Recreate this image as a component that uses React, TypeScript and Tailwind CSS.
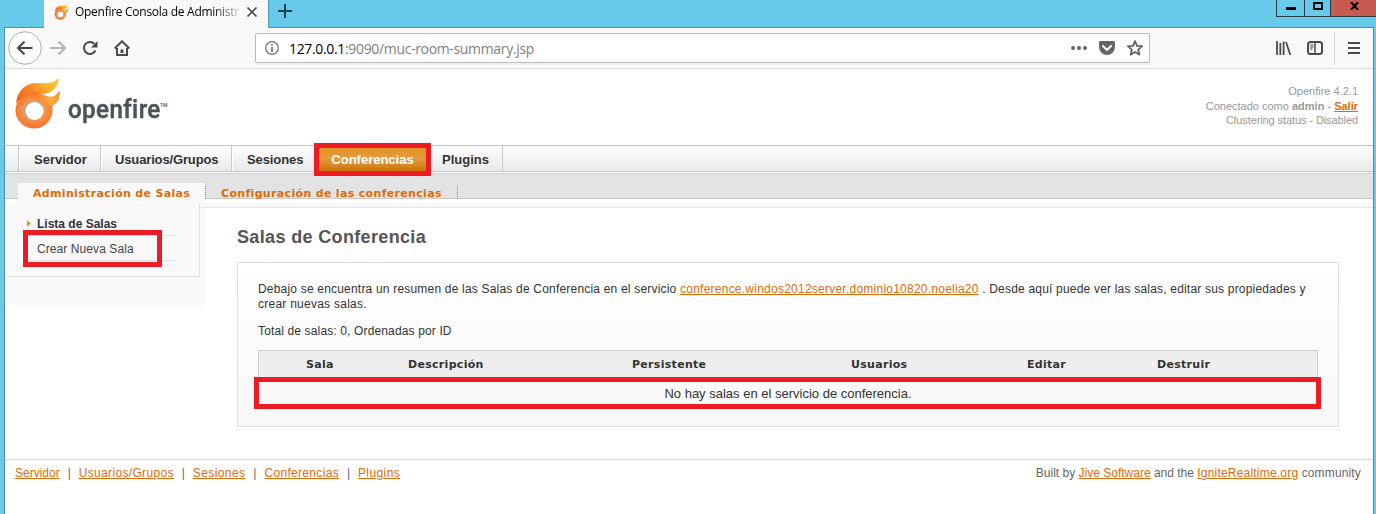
import React from "react";

const arial = "font-['Liberation_Sans',Arial,sans-serif]";
const link = "text-[#dc6c0a] underline underline-offset-1";

function FlameLogo({ className, id }: { className: string; id: string }) {
  return (
    <svg className={className} viewBox="0 0 46 52" fill="none">
      <defs>
        <linearGradient id={id + "a"} x1="0" y1="0.8" x2="1" y2="0.2">
          <stop offset="0" stopColor="#f65c1c" />
          <stop offset="0.45" stopColor="#fa8a24" />
          <stop offset="0.75" stopColor="#fdb52f" />
          <stop offset="1" stopColor="#ffc436" />
        </linearGradient>
        <radialGradient id={id + "b"} cx="0.43" cy="0.52" r="0.56">
          <stop offset="0.35" stopColor="#fba044" />
          <stop offset="0.75" stopColor="#f67a34" />
          <stop offset="1" stopColor="#ee5524" />
        </radialGradient>
        <linearGradient id={id + "c"} x1="0" y1="0" x2="1" y2="0">
          <stop offset="0" stopColor="#f98a34" stopOpacity="0" />
          <stop offset="0.6" stopColor="#fdae3c" />
          <stop offset="1" stopColor="#fc9a34" />
        </linearGradient>
      </defs>
      <path d="M1 27C2 13 11 6 22 6C32 7 40 6 43.500 0.500C44 9 38 16 29 17C18 15 7 18 1 27Z" fill={`url(#${id}a)`} />
      <path d="M19.500 15.500C27 16 31 20 36 20C40 20 42.500 17 44.500 13.500C45 22 42 27 37 28.500C40 40 31 51.500 19.500 51.500C9 51.500 0.500 43.500 0.500 33.500C0.500 24 9 15.500 19.500 15.500Z" fill={`url(#${id}b)`} />
      <path d="M18 17C27 16 31 20 36 20C40 20 42.500 17 44.500 13.500C45 22 42 27 37 28.500C32 28.500 30 24 24 22Z" fill={`url(#${id}c)`} />
      <circle cx="18.500" cy="33.500" r="10" fill="#a9aba8" />
      <circle cx="19.500" cy="34" r="9" fill="#fff" />
    </svg>
  );
}

function TabStrip() {
  return (
    <div className="flex h-7 items-start">
      <div className="h-[27px] w-[39px] shrink-0" />
      <div className="z-10 flex h-7 w-[225px] shrink-0 items-center border-r border-[#4d9db8] bg-[#f9f9f9] pl-2.5">
        <FlameLogo id="fav" className="-mt-1 h-4 w-[15px] shrink-0" />
        <div className="-mt-1 ml-[6px] w-[170px] whitespace-nowrap bg-linear-to-r from-black from-80% to-transparent bg-clip-text font-['Open_Sans',sans-serif] text-[12px] leading-4 tracking-[-0.280px] text-transparent">
          Openfire Consola de Administr
        </div>
        <svg className="-mt-1 ml-px size-3 shrink-0" viewBox="0 0 12 12" stroke="#4a4a4a" strokeWidth="1.700">
          <path d="M1.500 1.500l9 9M10.500 1.500l-9 9" />
        </svg>
      </div>
      <svg className="ml-[9px] mt-1 size-[14px]" viewBox="0 0 14 14" stroke="#24414b" strokeWidth="2">
        <path d="M7 0v14M0 7h14" />
      </svg>
      <div className="-mr-[3px] ml-auto flex h-[17px] border-b border-l border-[#2a3a40]">
        <div className="flex w-[28px] justify-center border-r border-[#2a3a40]"><div className="mt-[7px] h-[3px] w-2.5 bg-black" /></div>
        <div className="flex w-[26px] justify-center border-r border-[#2a3a40]"><div className="mt-[2px] h-2 w-2.5 border-2 border-black" /></div>
        <div className="flex w-[46px] justify-center bg-[#c75b52]">
          <svg className="mt-[2px] h-2 w-[9px]" viewBox="0 0 9 8" stroke="#000" strokeWidth="2"><path d="M1 0l7 8M8 0l-7 8" /></svg>
        </div>
      </div>
    </div>
  );
}

function Toolbar() {
  return (
    <div className="flex h-[41px] items-center border-b border-[#dcdcdc] bg-[#f9f9f9] pl-[3px] text-[#4a4a4a]">
      <svg className="size-[34px] shrink-0" viewBox="0 0 34 34" fill="none">
        <circle cx="17" cy="17" r="16.300" fill="#fdfdfd" stroke="#b0b0b0" />
        <path d="M24.500 17H10.500M16.500 10.500L10 17l6.500 6.500" stroke="#444" strokeWidth="2" />
      </svg>
      <svg className="ml-2 size-4 shrink-0" viewBox="0 0 16 16" fill="none" stroke="#b3b3b3" strokeWidth="2">
        <path d="M0 8h14M8.500 1.500L15 8l-6.500 6.500" />
      </svg>
      <svg className="ml-4 size-4 shrink-0" viewBox="0 0 16 16" fill="none" stroke="#4a4a4a" strokeWidth="2">
        <path d="M13.400 10.500A6 6 0 1 1 12.300 3.800" />
        <path d="M15.500 1v6.500H9z" fill="#4a4a4a" stroke="none" />
      </svg>
      <svg className="ml-4 size-4 shrink-0" viewBox="0 0 16 16" fill="none" stroke="#4a4a4a" strokeWidth="2">
        <path d="M.7 8.500L8 1.300l7.300 7.200" />
        <path d="M3 8v7h10V8" />
        <path d="M8 13V9.500" strokeWidth="3" />
      </svg>
      <div className="ml-[125px] flex h-[30px] w-[895px] shrink-0 items-center rounded-[2px] border border-[#bcbcbc] bg-white shadow-xs">
        <svg className="ml-[9px] size-[14px]" viewBox="0 0 14 14" fill="none" stroke="#707070">
          <circle cx="7" cy="7" r="6.300" strokeWidth="1.200" />
          <path d="M7 6v5M7 3v1.700" strokeWidth="1.700" />
        </svg>
        <div className="ml-2.5 mt-px whitespace-nowrap font-['Open_Sans',sans-serif] text-[14px] leading-5 tracking-[-0.340px] text-[#808080]">
          <span className="text-black">127.0.0.1</span>:9090/muc-room-summary.jsp
        </div>
        <svg className="ml-auto h-4 w-[17px]" viewBox="0 0 17 16" fill="#666">
          <circle cx="2" cy="8" r="2" /><circle cx="8" cy="8" r="2" /><circle cx="14" cy="8" r="2" />
        </svg>
        <svg className="ml-[11px] size-4" viewBox="0 0 16 16">
          <path d="M1.500 1h13A1.500 1.500 0 0 1 16 2.500V7A8 8 0 0 1 0 7V2.500A1.500 1.500 0 0 1 1.500 1z" fill="#666" />
          <path d="M4 6l4 4 4-4" fill="none" stroke="#fff" strokeWidth="2" strokeLinecap="round" strokeLinejoin="round" />
        </svg>
        <svg className="ml-3 mr-1.5 size-4" viewBox="0 0 16 16" fill="none" stroke="#666" strokeWidth="1.900" strokeLinejoin="round">
          <path d="M8 1.200l2 4.700 5 .4-3.800 3.300 1.200 5L8 12l-4.400 2.600 1.200-5L1 6.300l5-.4z" />
        </svg>
      </div>
      <svg className="ml-[125px] h-4 w-4 shrink-0" viewBox="0 0 16 16" stroke="#4a4a4a" strokeWidth="2">
        <path d="M2 1v14M5.300 3v12M8.600 1.500v13.500M11 2l4.300 13" strokeWidth="1.800" />
      </svg>
      <svg className="ml-4 h-4 w-4 shrink-0" viewBox="0 0 16 16" fill="none" stroke="#4a4a4a">
        <rect x="1" y="2" width="14" height="12" rx="2.500" strokeWidth="2" />
        <path d="M8 2v12" strokeWidth="1.500" /><path d="M3 5h3.500M3 7h3.500M3 9h2.500" />
      </svg>
      <div className="ml-[11px] h-[34px] w-px bg-[#d8d8d8]" />
      <svg className="ml-[13px] h-4 w-3 shrink-0" viewBox="0 0 12 16" stroke="#4a4a4a" strokeWidth="2">
        <path d="M0 3h12M0 8h12M0 13h12" />
      </svg>
    </div>
  );
}

function Header() {
  return (
    <header className="flex h-[76px]">
      <FlameLogo id="logo" className="ml-2.5 mt-2 h-[52px] w-[46px]" />
      <div className="ml-[7px] mt-[24px] flex font-['Roboto',sans-serif] text-[26px] font-medium leading-[32px] text-[#4a5559]">
        <span className="w-[92px] origin-left scale-x-[0.93] tracking-[0.400px] [-webkit-text-stroke:0.5px_#4a5559]">openfire</span>
        <span className="mt-[9px] text-[5px] leading-[6px]">TM</span>
      </div>
      <div className="ml-auto mr-[15px] mt-[15px] text-right text-[11px] leading-[14.500px] text-[#999]">
        <div>Openfire 4.2.1</div>
        <div>Conectado como <b>admin</b> - <a className="font-bold text-[#dc6c0a] underline">Salir</a></div>
        <div className="tracking-[-0.090px]">Clustering status - Disabled</div>
      </div>
    </header>
  );
}

const navItem = "flex h-[25px] items-center border-r border-[#c9c9c9] pt-[3px] shadow-[inset_1px_0_#fff]";

function MainNav() {
  return (
    <nav className="flex h-[27px] border-y border-[#c4c4c4] bg-linear-to-b from-white to-[#e9e9e9] text-[13px] font-bold text-[#333]">
      <div className="h-[25px] w-[14px] border-r border-[#c9c9c9]" />
      <div className={navItem + " w-[82px] pl-[15px]"}>Servidor</div>
      <div className={navItem + " w-[131px] pl-[14px] tracking-[-0.140px]"}>Usuarios/Grupos</div>
      <div className={navItem + " w-[85px] pl-[15px] tracking-[-0.100px]"}>Sesiones</div>
      <div className="relative flex h-[25px] w-[111px] items-center justify-center bg-linear-to-b from-[#e08d1c] via-[#e69c3c] to-[#cb7400] pt-[3px] text-white">
        Conferencias
        <div className="absolute -left-[3px] -top-[3px] h-[33px] w-[117px] border-5 border-[#ed1c24]" />
      </div>
      <div className={navItem + " w-[75px] pl-[14px]"}>Plugins</div>
    </nav>
  );
}

const subTab = "flex items-center font-['DejaVu_Sans',Verdana,sans-serif] text-[11px] font-bold tracking-[0.330px] text-[#dc6c0a]";

function SubNav() {
  return (
    <div className="flex h-[31px] flex-col">
      <div className="h-px bg-white" />
      <div className="flex h-[26px] border-b border-t border-b-[#c8c8c8] border-t-[#cfcfcf] bg-[#e3e3e3]">
        <div className={subTab + " z-10 ml-[13px] mt-[9px] h-5 w-[187px] shrink-0 bg-[#f9f9f9] pl-[15px]"}>
          <span className="whitespace-nowrap pt-[3px]">Administración de Salas</span>
        </div>
        <div className={subTab + " mt-3 h-[13px] w-[253px] border-x border-dotted border-[#8a8a8a] pl-[15px]"}>
          <span className="whitespace-nowrap pt-[3px]">Configuración de las conferencias</span>
        </div>
      </div>
      <div className="h-1 bg-white" />
    </div>
  );
}

function Sidebar() {
  return (
    <aside className="h-[102px] w-[200px] shrink-0 bg-[#f9f9f9]">
      <div className="h-[74px] w-[195px] border-b border-r border-[#e0e0e0] pl-[21px] pt-2">
        <div className="relative w-[151px] text-[12px] text-[#333]">
          <div className="flex h-[25px] items-center border-b border-[#e3e3e3]">
            <svg className="ml-px h-[7px] w-1" viewBox="0 0 4 7"><path d="M0 0l4 3.500L0 7z" fill="#dca00a" /></svg>
            <span className="ml-1.5 pt-0.5 font-bold">Lista de Salas</span>
          </div>
          <div className="flex h-[25px] items-center border-b border-[#e3e3e3] pl-[11px] pt-0.5 text-[#444]">
            <span className="tracking-[0.080px]">Crear Nueva Sala</span>
          </div>
          <div className="absolute -left-[3px] top-[19px] h-[37px] w-[139px] border-5 border-[#ed1c24]" />
        </div>
      </div>
    </aside>
  );
}

function RoomTable() {
  return (
    <div className="relative mt-[11px] w-[1060px] border border-[#ccc]">
      <div className="grid h-[27px] grid-cols-[47px_102px_224px_219px_176px_130px_1fr] items-center bg-[#eee] font-['DejaVu_Sans',Verdana,sans-serif] text-[11px] font-bold tracking-[0.300px] text-[#333]">
        <span />
        <span>Sala</span>
        <span>Descripción</span>
        <span>Persistente</span>
        <span>Usuarios</span>
        <span>Editar</span>
        <span>Destruir</span>
      </div>
      <div className="flex h-[29px] items-center justify-center pt-0.5 text-[13px]">No hay salas en el servicio de conferencia.</div>
      <div className="absolute -left-[5px] top-[26px] h-8 w-[1067px] border-5 border-[#ed1c24]" />
    </div>
  );
}

function Footer() {
  return (
    <footer className="flex h-[55px] border-t border-[#dcdcdc] pl-2.5 pr-[12px] pt-[6px] text-[12px] leading-[15px] text-[#666]">
      <div className="flex">
        <a className={link}>Servidor</a><span className="w-[19px] text-center">|</span>
        <a className={link + " tracking-[0.340px]"}>Usuarios/Grupos</a><span className="w-[19px] text-center">|</span>
        <a className={link + " tracking-[0.400px]"}>Sesiones</a><span className="w-[19px] text-center">|</span>
        <a className={link + " tracking-[0.320px]"}>Conferencias</a><span className="w-[19px] text-center">|</span>
        <a className={link + " tracking-[0.400px]"}>Plugins</a>
      </div>
      <div className="ml-auto">
        Built by <a className={link}>Jive Software</a> and the <a className={link + " tracking-[0.200px]"}>IgniteRealtime.org</a> <span className="tracking-[0.150px]">community</span>
      </div>
    </footer>
  );
}

export default function App() {
  return (
    <div className={arial + " h-[514px] w-[1376px] overflow-hidden bg-[#67caea] pl-1 pr-0.5"}>
      <div className="flex h-[27px] flex-col"><div className="ml-px"><TabStrip /></div></div>
      <div className="h-[487px] border-x border-t border-[#4d8fa6] bg-white">
        <Toolbar />
        <Header />
        <MainNav />
        <SubNav />
        <div className="flex h-[256px]">
          <Sidebar />
          <main className="grow">
            <div className="-ml-1 h-[5px] border-b border-[#e3e3e3] bg-[#f9f9f9]" />
            <h1 className="ml-8 mt-[18px] text-[18px] font-bold leading-[22px] tracking-[0.350px] text-[#555]">Salas de Conferencia</h1>
            <section className="ml-8 mt-[14px] h-[165px] w-[1102px] border border-[#dcdcdc] bg-linear-to-b from-white to-[#f8f8f8] px-5 pt-[19px] text-[12px] leading-[15px] text-[#333]">
              <p className="whitespace-nowrap tracking-[0.195px]">
                Debajo se encuentra un resumen de las Salas de Conferencia en el servicio <a className={link + " tracking-[0.240px]"}>conference.windos2012server.dominio10820.noelia20</a> . Desde aquí puede ver las salas, editar sus propiedades y<br /><span className="tracking-[0.250px]">crear nuevas salas.</span>
              </p>
              <p className="mt-3 tracking-[0.140px]">Total de salas: 0, Ordenadas por ID</p>
              <RoomTable />
            </section>
          </main>
        </div>
        <Footer />
      </div>
    </div>
  );
}
